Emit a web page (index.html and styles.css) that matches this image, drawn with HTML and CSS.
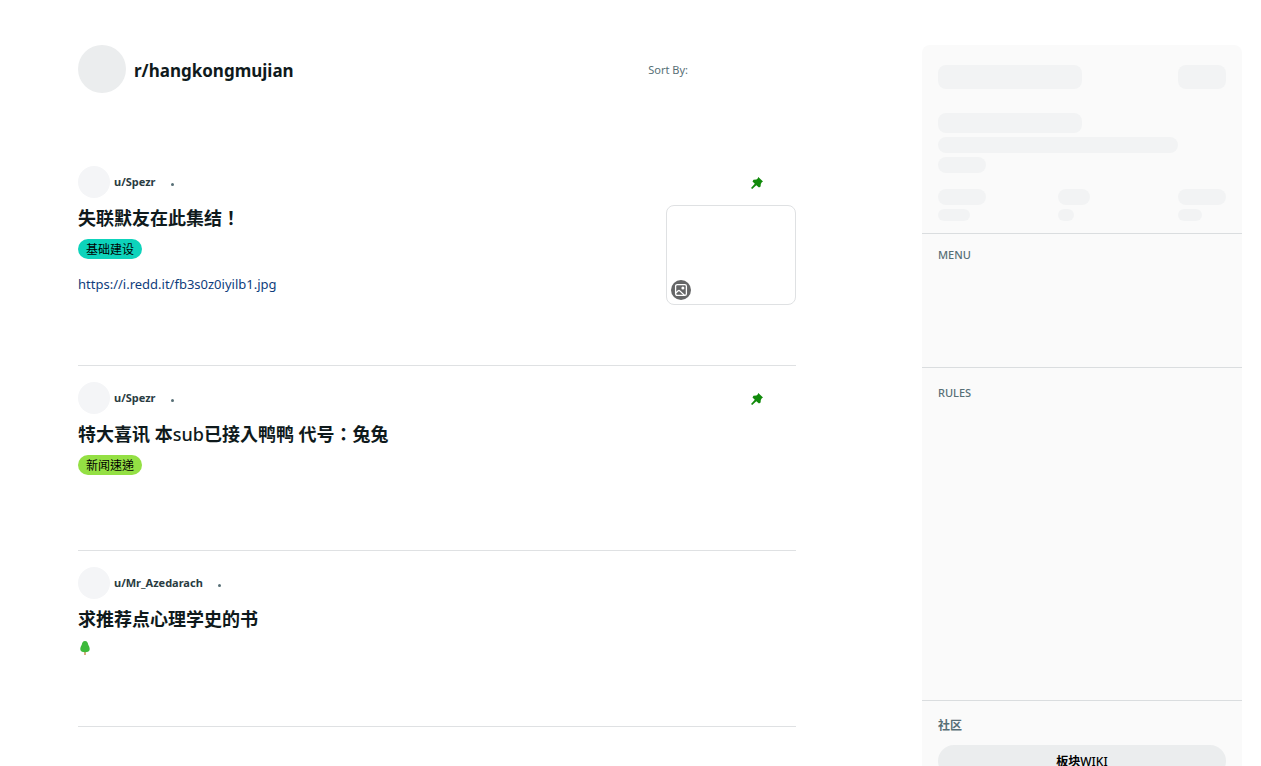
FILE: index.html
```
<!DOCTYPE html>
<html lang="zh-Hant">
<head>
    <meta charset="utf-8">
    <meta name="viewport" content="width=device-width, initial-scale=1">
    <title>r/hangkongmujian</title>
    <link rel="stylesheet" href="styles.css">
</head>
<body>
    <svg class="sprite" aria-hidden="true">
        <symbol id="pin" viewBox="0 0 12 12">
            <path d="M7.3 0 L12 4.6 L10.8 5.3 L9.8 6.9 L9.6 9.6 L8 10.6 L5.3 8.3 L1.2 12 L0 10.9 L3.8 6.8 L1.5 4.4 L2.5 2.8 L5.4 2.5 L6.7 1.4 Z"/>
        </symbol>
    </svg>
    <div class="page">
        <main class="feed">
            <header class="feed-header">
                <span class="community-icon"></span>
                <h1>r/hangkongmujian</h1>
                <span class="sort">Sort By:</span>
            </header>

            <article class="post">
                <div class="credit">
                    <span class="avatar"></span>
                    <a class="author" href="#">u/Spezr</a>
                    <span class="dot"></span>
                    <svg class="pin"><use href="#pin"/></svg>
                </div>
                <div class="post-body">
                    <div class="post-text">
                        <h2>失联默友在此集结！</h2>
                        <span class="flair teal">基础建设</span>
                        <a class="post-link" href="#">https://i.redd.it/fb3s0z0iyilb1.jpg</a>
                    </div>
                    <div class="thumb">
                        <svg class="media-icon" viewBox="0 0 20 20">
                            <circle cx="10" cy="10" r="10" fill="#656667"/>
                            <rect x="4.6" y="4.6" width="10.8" height="10.8" rx="1.6" fill="none" stroke="#fff" stroke-width="1.3"/>
                            <path d="M4.8 13 L7.2 10.8 Q8 10.2 8.8 10.9 L13.4 15.2" fill="none" stroke="#fff" stroke-width="1.3"/>
                            <circle cx="11.9" cy="8" r="1.5" fill="#fff"/>
                        </svg>
                    </div>
                </div>
                <div class="actions"></div>
            </article>

            <article class="post">
                <div class="credit">
                    <span class="avatar"></span>
                    <a class="author" href="#">u/Spezr</a>
                    <span class="dot"></span>
                    <svg class="pin"><use href="#pin"/></svg>
                </div>
                <div class="post-body">
                    <div class="post-text">
                        <h2>特大喜讯 本<span class="latin">sub</span>已接入鸭鸭 代号：兔兔</h2>
                        <span class="flair green">新闻速递</span>
                    </div>
                </div>
                <div class="actions"></div>
            </article>

            <article class="post">
                <div class="credit">
                    <span class="avatar"></span>
                    <a class="author" href="#">u/Mr_Azedarach</a>
                    <span class="dot"></span>
                </div>
                <div class="post-body">
                    <div class="post-text">
                        <h2>求推荐点心理学史的书</h2>
                        <svg class="tree" viewBox="0 0 14 16">
                            <path d="M6.3 10h1.4v5H6.3z" fill="#c98a4b"/>
                            <path d="M7 1C4.8 1 4 3.2 3.7 5 2.6 6.4 2.3 8 2.3 9.3 2.3 11.3 4 12.2 7 12.2S11.7 11.3 11.7 9.3C11.7 8 11.4 6.4 10.3 5 10 3.2 9.2 1 7 1Z" fill="#3dba3b"/>
                        </svg>
                    </div>
                </div>
                <div class="actions"></div>
            </article>
        </main>

        <aside class="sidebar">
            <!-- loading placeholders -->
            <section class="about">
                <div class="row">
                    <span class="bone w144 h24"></span>
                    <span class="bone w48 h24"></span>
                </div>
                <div class="lines">
                    <span class="bone w144 h20"></span>
                    <span class="bone w240 h16"></span>
                    <span class="bone w48 h16"></span>
                </div>
                <div class="stats">
                    <div class="stat"><span class="bone w48 h16"></span><span class="bone w32 h12"></span></div>
                    <div class="stat"><span class="bone w32 h16"></span><span class="bone w16 h12"></span></div>
                    <div class="stat"><span class="bone w48 h16"></span><span class="bone w24 h12"></span></div>
                </div>
            </section>
            <section class="menu">
                <h3>MENU</h3>
            </section>
            <section class="rules">
                <h3>RULES</h3>
            </section>
            <section class="links">
                <h3>社区</h3>
                <button type="button">板块<span class="latin">WIKI</span></button>
            </section>
        </aside>
    </div>
</body>
</html>
```
FILE: styles.css
```
* {
    box-sizing: border-box;
}

body {
    margin: 0;
    background: #fff;
    color: #0f1a1c;
    font-family: "Noto Sans", "Noto Sans CJK TC", sans-serif;
}

h1, h2, h3 {
    margin: 0;
}

a {
    text-decoration: none;
}

.sprite {
    display: none;
}

.latin {
    font-weight: 500;
}

.page {
    display: flex;
    align-items: flex-start;
    gap: 126px;
    padding: 45px 19px 0 78px;
}

.feed {
    flex: 1;
    min-width: 0;
}

.feed-header {
    display: flex;
    align-items: center;
    height: 48px;
    margin-bottom: 57px;
}

.community-icon {
    width: 48px;
    height: 48px;
    margin-right: 8px;
    border-radius: 50%;
    background: #ebedee;
}

.feed-header h1 {
    font-size: 17px;
    line-height: 24px;
    padding-top: 3px;
}

.sort {
    margin-left: auto;
    margin-right: 108px;
    padding-top: 2px;
    font-size: 11px;
    line-height: 16px;
    color: #576f76;
}

/* posts */
.post {
    padding-top: 16px;
    border-bottom: 1px solid #dfe1e3;
}

.credit {
    display: flex;
    align-items: center;
    height: 32px;
}

.avatar {
    width: 32px;
    height: 32px;
    margin-right: 4px;
    border-radius: 50%;
    background: #f4f5f7;
}

.author {
    font-size: 11px;
    line-height: 16px;
    font-weight: 700;
    color: #2a3c42;
}

.dot {
    width: 3px;
    height: 3px;
    margin: 5px 0 0 15px;
    border-radius: 50%;
    background: #576f76;
}

.pin {
    width: 12px;
    height: 12px;
    margin-left: auto;
    margin-right: 33px;
    margin-top: 2px;
    fill: #118a0b;
}

.post-body {
    display: flex;
    justify-content: space-between;
    margin-top: 7px;
}

.post-text {
    display: flex;
    flex-direction: column;
    align-items: flex-start;
}

.post h2 {
    padding-top: 1px;
    font-size: 18px;
    line-height: 24px;
    font-weight: 600;
    margin-bottom: 9px;
}

.flair {
    height: 20px;
    padding: 0 8px;
    margin-bottom: 15px;
    border-radius: 10px;
    font-size: 12px;
    line-height: 22px;
    color: #000;
}

.teal {
    background: #0dd3bb;
}

.green {
    background: #94e044;
}

.post-link {
    font-size: 13px;
    line-height: 20px;
    color: #0f3d7d;
}

.tree {
    width: 14px;
    height: 16px;
    margin-bottom: 10px;
}

.thumb {
    display: flex;
    align-items: flex-end;
    width: 130px;
    height: 100px;
    padding: 4px;
    border: 1px solid #dfe1e3;
    border-radius: 8px;
}

.media-icon {
    width: 20px;
    height: 20px;
}

.actions {
    height: 60px;
}

/* sidebar */
.sidebar {
    width: 320px;
    flex-shrink: 0;
    border-radius: 8px;
    background: #fafafa;
}

.sidebar section {
    padding: 12px 16px;
    border-bottom: 1px solid #dadddf;
}

.sidebar .about {
    padding-top: 20px;
}

.row {
    display: flex;
    justify-content: space-between;
}

.lines {
    display: grid;
    gap: 4px;
    margin: 24px 0 16px;
}

.stats {
    display: grid;
    grid-template-columns: 120px 120px 48px;
}

.stat {
    display: grid;
    gap: 4px;
}

.bone {
    border-radius: 8px;
    background: #f2f3f4;
}

.w16 { width: 16px; }
.w24 { width: 24px; }
.w32 { width: 32px; }
.w48 { width: 48px; }
.w144 { width: 144px; }
.w240 { width: 240px; }
.h12 { height: 12px; }
.h16 { height: 16px; }
.h20 { height: 20px; }
.h24 { height: 24px; }

.sidebar h3 {
    font-size: 11px;
    line-height: 18px;
    font-weight: 500;
    color: #576f76;
}

.menu {
    min-height: 134px;
}

.sidebar .rules {
    min-height: 333px;
    padding-top: 16px;
}

.sidebar .links {
    padding-top: 15px;
    border-bottom: 0;
}

.sidebar .links h3 {
    font-size: 12px;
    line-height: 20px;
    font-weight: 600;
}

.links button {
    width: 100%;
    height: 32px;
    margin-top: 9px;
    border: 0;
    border-radius: 16px;
    background: #ebedee;
    color: #000;
    font-family: inherit;
    font-size: 12px;
    font-weight: 600;
}
```
